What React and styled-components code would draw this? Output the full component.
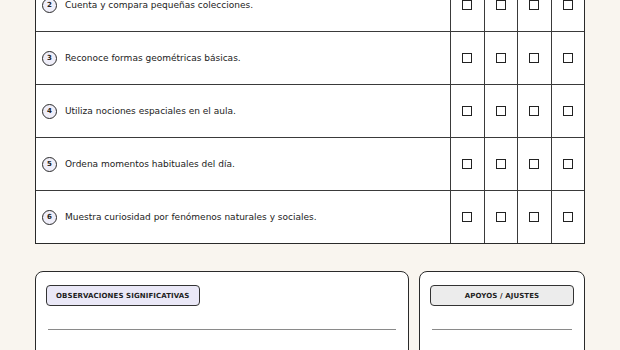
import React from 'react';
import styled, { createGlobalStyle } from 'styled-components';

const GlobalStyle = createGlobalStyle`
  html, body {
    margin: 0;
    padding: 0;
    background: #f9f5ef;
    font-family: "DejaVu Sans", "Liberation Sans", sans-serif;
    color: #222;
  }
`;

const Page = styled.div`
  width: 620px;
  height: 350px;
  overflow: hidden;
  box-sizing: border-box;
  padding: 0 35px;
`;

const Sheet = styled.div`
  margin-top: -21px;
`;

const Table = styled.div`
  background: #fff;
  border: 1.5px solid #2a2a2a;
  border-top: none;
`;

const Row = styled.div`
  display: grid;
  grid-template-columns: 1fr 33.5px 33.5px 33.5px 33.5px;
  height: 53px;
  box-sizing: border-box;
  border-bottom: 1px solid #3a3a3a;
  &:last-child {
    border-bottom: none;
    height: 52px;
  }
`;

const ItemCell = styled.div`
  display: flex;
  align-items: center;
  gap: 8px;
  padding-left: 6px;
  font-size: 9px;
`;

const Num = styled.span`
  width: 13px;
  height: 13px;
  border: 1.5px solid #2a2a2a;
  border-radius: 50%;
  background: #efeef9;
  display: flex;
  align-items: center;
  justify-content: center;
  font-size: 7px;
  font-weight: bold;
  flex-shrink: 0;
`;

const CheckCell = styled.div`
  border-left: 1px solid #3a3a3a;
  display: flex;
  align-items: center;
  justify-content: center;
`;

const Box = styled.span`
  width: 8px;
  height: 8px;
  border: 1.6px solid #222;
`;

const Cards = styled.div`
  display: grid;
  grid-template-columns: 1fr 166px;
  gap: 10px;
  margin-top: 27px;
`;

const Card = styled.div`
  display: flex;
  flex-direction: column;
  align-items: ${({ stretch }) => (stretch ? 'stretch' : 'flex-start')};
  background: #fff;
  border: 1.5px solid #2a2a2a;
  border-radius: 8px;
  padding: 13px 10px 0;
  height: 100px;
`;

const Pill = styled.div`
  display: flex;
  align-items: center;
  justify-content: ${({ center }) => (center ? 'center' : 'flex-start')};
  height: 19px;
  padding: 0 9px;
  border: 1.2px solid #333;
  border-radius: 4px;
  background: ${({ tone }) => tone};
  font-size: 7px;
  font-weight: bold;
  letter-spacing: 0.1px;
  color: #1e1e1e;
`;

const Line = styled.div`
  align-self: stretch;
  margin: 23px 2px 0;
  border-top: 1px solid #8a8a8a;
`;

const items = [
  'Cuenta y compara pequeñas colecciones.',
  'Reconoce formas geométricas básicas.',
  'Utiliza nociones espaciales en el aula.',
  'Ordena momentos habituales del día.',
  'Muestra curiosidad por fenómenos naturales y sociales.',
];

const App = () => (
  <Page>
    <GlobalStyle />
    <Sheet>
      <Table>
        {items.map((text, i) => (
          <Row key={i}>
            <ItemCell>
              <Num>{i + 2}</Num>
              {text}
            </ItemCell>
            {[0, 1, 2, 3].map((c) => (
              <CheckCell key={c}>
                <Box />
              </CheckCell>
            ))}
          </Row>
        ))}
      </Table>
      <Cards>
        <Card>
          <Pill tone="#eae8f7">OBSERVACIONES SIGNIFICATIVAS</Pill>
          <Line />
        </Card>
        <Card stretch>
          <Pill center tone="#ececec">APOYOS / AJUSTES</Pill>
          <Line />
        </Card>
      </Cards>
    </Sheet>
  </Page>
);

export default App;
